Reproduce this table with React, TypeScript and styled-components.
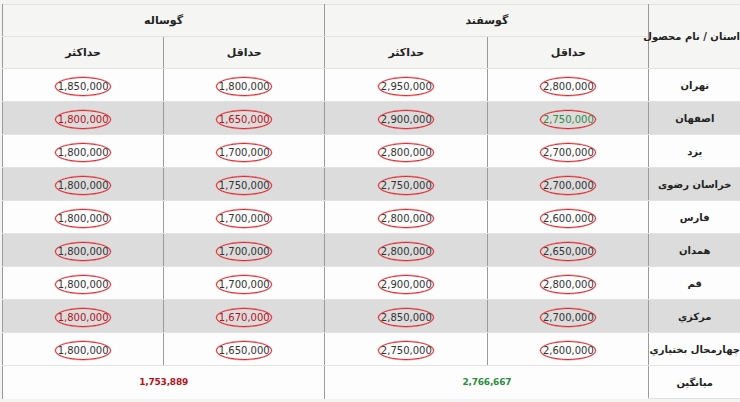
import React from "react";
import styled, { createGlobalStyle } from "styled-components";

const GlobalStyle = createGlobalStyle`
  html, body {
    margin: 0;
    padding: 0;
    background: #f3f3f2;
    overflow: hidden;
  }
  body {
    font-family: "DejaVu Sans", Tahoma, sans-serif;
  }
`;

type Tone = "normal" | "red" | "green";

interface Row {
  province: string;
  values: [number, number, number, number];
  tones?: [Tone, Tone, Tone, Tone];
}

const rows: Row[] = [
  { province: "تهران", values: [2800000, 2950000, 1800000, 1850000] },
  {
    province: "اصفهان",
    values: [2750000, 2900000, 1650000, 1800000],
    tones: ["green", "normal", "red", "red"],
  },
  { province: "یزد", values: [2700000, 2800000, 1700000, 1800000] },
  { province: "خراسان رضوی", values: [2700000, 2750000, 1750000, 1800000] },
  { province: "فارس", values: [2600000, 2800000, 1700000, 1800000] },
  { province: "همدان", values: [2650000, 2800000, 1700000, 1800000] },
  { province: "قم", values: [2800000, 2900000, 1700000, 1800000] },
  {
    province: "مرکزي",
    values: [2700000, 2850000, 1670000, 1800000],
    tones: ["normal", "normal", "red", "red"],
  },
  { province: "چهارمحال بختياري", values: [2600000, 2750000, 1650000, 1800000] },
];

const toneColor: Record<Tone, string> = {
  normal: "#333333",
  red: "#b3121b",
  green: "#2e8b3e",
};

const Page = styled.div`
  padding: 4px 0 0 2px;
`;

const Table = styled.table`
  width: 738px;
  table-layout: fixed;
  border-collapse: collapse;
  direction: rtl;
  border-left: 1px solid #9a9a9a;
`;

const HeadCell = styled.th`
  background: #f5f5f3;
  height: 31px;
  padding: 0;
  font-size: 11px;
  font-weight: bold;
  color: #222;
  text-align: center;
  white-space: nowrap;
  border-top: 1px solid #e2e2e2;
  border-bottom: 1px solid #e2e2e2;
  border-left: 1px solid #9a9a9a;
`;

const NameHead = styled(HeadCell)`
  overflow: visible;
  font-size: 10px;
  text-align: left;
`;

const BodyRow = styled.tr<{ $striped: boolean }>`
  background: ${(p) => (p.$striped ? "#dcdcdc" : "#fdfdfd")};
`;

const NameCell = styled.td`
  height: 32px;
  padding: 0;
  font-size: 10px;
  font-weight: bold;
  color: #222;
  text-align: center;
  white-space: nowrap;
  border-bottom: 1px solid #e2e2e2;
  border-left: 1px solid #9a9a9a;
`;

const ValueCell = styled.td`
  height: 32px;
  padding: 0;
  text-align: center;
  border-bottom: 1px solid #e2e2e2;
  border-left: 1px solid #9a9a9a;
`;

const Circled = styled.span<{ $tone: Tone }>`
  display: inline-flex;
  align-items: center;
  justify-content: center;
  width: 54px;
  height: 17px;
  border: 1px solid #e4262b;
  border-radius: 50%;
  font-size: 10px;
  color: ${(p) => toneColor[p.$tone]};
  direction: ltr;
  box-shadow: 0 0 0 0.4px rgba(228, 38, 43, 0.5);
`;

const FootRow = styled.tr`
  background: #fdfdfd;
`;

const AverageCell = styled.td<{ $tone: Tone }>`
  height: 31px;
  padding: 0;
  text-align: center;
  font-size: 9px;
  font-weight: bold;
  letter-spacing: -0.2px;
  color: ${(p) => toneColor[p.$tone]};
  border-left: 1px solid #9a9a9a;
  direction: rtl;
`;

const fmt = (n: number) => n.toLocaleString("en-US");

const App: React.FC = () => {
  return (
    <>
      <GlobalStyle />
      <Page>
        <Table>
          <colgroup>
            <col style={{ width: 91 }} />
            <col style={{ width: 161 }} />
            <col style={{ width: 163 }} />
            <col style={{ width: 161 }} />
            <col style={{ width: 161 }} />
          </colgroup>
          <thead>
            <tr>
              <NameHead rowSpan={2}>استان / نام محصول</NameHead>
              <HeadCell colSpan={2}>گوسفند</HeadCell>
              <HeadCell colSpan={2}>گوساله</HeadCell>
            </tr>
            <tr>
              <HeadCell>حداقل</HeadCell>
              <HeadCell>حداکثر</HeadCell>
              <HeadCell>حداقل</HeadCell>
              <HeadCell>حداکثر</HeadCell>
            </tr>
          </thead>
          <tbody>
            {rows.map((row, i) => (
              <BodyRow key={row.province} $striped={i % 2 === 1}>
                <NameCell>{row.province}</NameCell>
                {row.values.map((v, j) => (
                  <ValueCell key={j}>
                    <Circled $tone={row.tones ? row.tones[j] : "normal"}>
                      {fmt(v)}
                    </Circled>
                  </ValueCell>
                ))}
              </BodyRow>
            ))}
            <FootRow>
              <NameCell>میانگین</NameCell>
              <AverageCell colSpan={2} $tone="green">
                2,766,667
              </AverageCell>
              <AverageCell colSpan={2} $tone="red">
                1,753,889
              </AverageCell>
            </FootRow>
          </tbody>
        </Table>
      </Page>
    </>
  );
};

export default App;
